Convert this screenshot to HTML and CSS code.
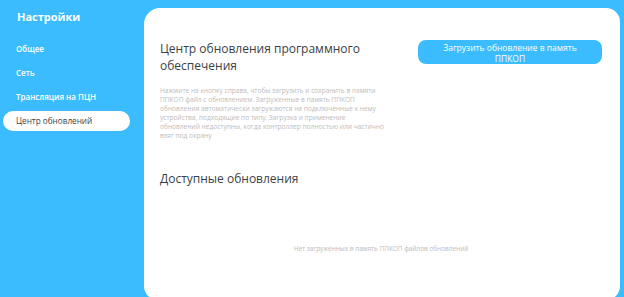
FILE: index.html
```html
<!DOCTYPE html>
<html lang="ru">
<head>
  <meta charset="UTF-8">
  <meta name="viewport" content="width=device-width, initial-scale=1.0">
  <title>Настройки</title>
  <link rel="stylesheet" href="styles.css">
</head>
<body>
  <div class="sidebar">
    <div class="sidebar-title">Настройки</div>
    <div class="menu">
      <div class="menu-item">Общее</div>
      <div class="menu-item">Сеть</div>
      <div class="menu-item">Трансляция на ПЦН</div>
      <div class="menu-item active">Центр обновлений</div>
    </div>
  </div>

  <div class="card">
    <div class="card-header">
      <div class="intro">
        <h1 class="title">Центр обновления программного обеспечения</h1>
        <p class="hint">Нажмите на кнопку справа, чтобы загрузить и сохранить в памяти ППКОП файл с обновлением. Загруженные в память ППКОП обновления автоматически загружаются на подключенные к нему устройства, подходящие по типу. Загрузка и применение обновлений недоступны, когда контроллер полностью или частично взят под охрану</p>
      </div>
      <button class="upload-button">Загрузить обновление в память ППКОП</button>
    </div>

    <h2 class="title section-title">Доступные обновления</h2>
    <div class="empty">Нет загруженных в память ППКОП файлов обновлений</div>
  </div>
</body>
</html>
```

FILE: styles.css
```css
:root {
  --accent: #3bbcfe;
  --text-dark: #3a3f45;
  --text-muted: #bcbcbc;
  --white: #ffffff;
}

html, body {
  height: 100%;
}

body {
  margin: 0;
  padding: 0;
  font-family: 'Open Sans', 'Noto Sans', sans-serif;
  background-color: var(--accent);
  display: flex;
  overflow: hidden;
}

.sidebar {
  width: 144px;
  flex-shrink: 0;
  padding-top: 7px;
}

.sidebar-title {
  color: var(--white);
  font-size: 11px;
  font-weight: 700;
  padding-left: 17px;
  line-height: 20px;
}

.menu {
  margin-top: 12px;
  display: flex;
  flex-direction: column;
  gap: 4px;
  padding-right: 14px;
  padding-left: 3px;
}

.menu-item {
  color: var(--white);
  font-size: 8px;
  font-weight: 600;
  line-height: 20px;
  padding-left: 13px;
  border-radius: 10px;
}

.menu-item.active {
  background-color: var(--white);
  color: var(--text-dark);
  font-size: 8.2px;
  font-weight: 500;
}

.card {
  flex-grow: 1;
  margin: 8px 4px 0 0;
  height: 292px;
  background-color: var(--white);
  border-radius: 16px 14px 14px 14px;
  padding: 32px 18px 0 16px;
  box-sizing: border-box;
}

.card-header {
  display: flex;
  justify-content: space-between;
  align-items: flex-start;
}

.intro {
  width: 224px;
}

.title {
  margin: 0;
  font-size: 12px;
  font-weight: 500;
  line-height: 17px;
  color: var(--text-dark);
}

.hint {
  margin: 12px 0 0;
  font-size: 6.6px;
  line-height: 9px;
  color: var(--text-muted);
}

.upload-button {
  width: 184px;
  height: 24px;
  border: none;
  border-radius: 8px;
  background-color: var(--accent);
  color: var(--white);
  font-family: inherit;
  font-size: 8.5px;
  line-height: 11px;
  padding: 1px 20px 0;
  cursor: pointer;
}

.section-title {
  margin-top: 30px;
}

.empty {
  margin-top: 57px;
  text-align: center;
  font-size: 6.45px;
  color: var(--text-muted);
}
```
